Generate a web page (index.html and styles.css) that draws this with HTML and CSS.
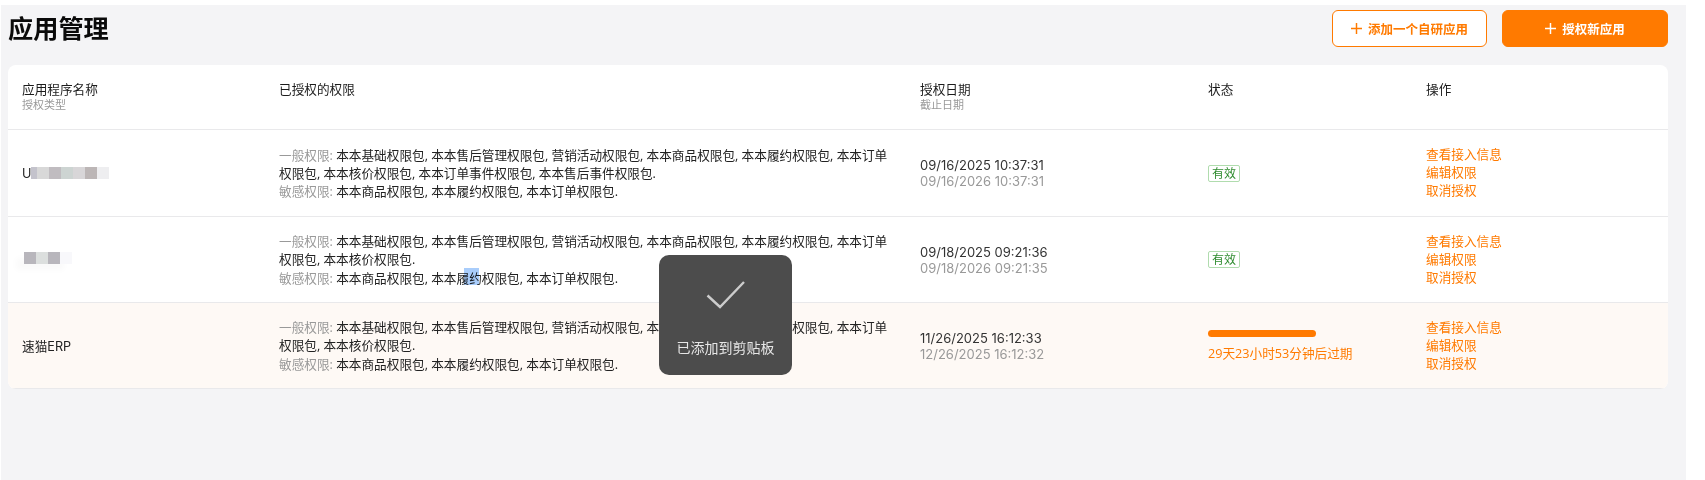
FILE: index.html
```html
<!DOCTYPE html>
<html lang="zh-CN">
<head>
<meta charset="utf-8">
<title>应用管理</title>
<link rel="stylesheet" href="styles.css">
</head>
<body>
<main class="page">
  <header class="topbar">
    <h1 class="title">应用管理</h1>
    <div class="actions">
      <button class="btn btn-outline"><svg class="plus" viewBox="0 0 12 12"><path d="M6 0v12M0 6h12"/></svg>添加一个自研应用</button>
      <button class="btn btn-solid"><svg class="plus" viewBox="0 0 12 12"><path d="M6 0v12M0 6h12"/></svg>授权新应用</button>
    </div>
  </header>
  <section class="card">
    <div class="row head">
      <div class="cell"><div>应用程序名称</div><div class="sub">授权类型</div></div>
      <div class="cell">已授权的权限</div>
      <div class="cell"><div>授权日期</div><div class="sub">截止日期</div></div>
      <div class="cell">状态</div>
      <div class="cell">操作</div>
    </div>

    <div class="row body first">
      <div class="cell name"><span>U</span><span class="mosaic"><i class="t a"></i><i class="t b"></i><i class="t c"></i><i class="t d"></i><i class="t e"></i><i class="t f"></i><i class="t g"></i></span></div>
      <div class="cell perms">
        <div><span class="muted">一般权限:</span> 本本基础权限包, 本本售后管理权限包, 营销活动权限包, 本本商品权限包, 本本履约权限包, 本本订单权限包, 本本核价权限包, 本本订单事件权限包, 本本售后事件权限包.</div>
        <div><span class="muted">敏感权限:</span> 本本商品权限包, 本本履约权限包, 本本订单权限包.</div>
      </div>
      <div class="cell dates"><div>09/16/2025 10:37:31</div><div class="muted">09/16/2026 10:37:31</div></div>
      <div class="cell"><span class="badge">有效</span></div>
      <div class="cell links"><a>查看接入信息</a><a>编辑权限</a><a>取消授权</a></div>
    </div>

    <div class="row body">
      <div class="cell name"><span class="mosaic mosaic-2"><i class="t h"></i><i class="t i"></i><i class="t h"></i><i class="t j"></i></span></div>
      <div class="cell perms">
        <div><span class="muted">一般权限:</span> 本本基础权限包, 本本售后管理权限包, 营销活动权限包, 本本商品权限包, 本本履约权限包, 本本订单权限包, 本本核价权限包.</div>
        <div><span class="muted">敏感权限:</span> 本本商品权限包, 本本履约权限包, 本本订单权限包.</div>
        <span class="selection"></span>
      </div>
      <div class="cell dates"><div>09/18/2025 09:21:36</div><div class="muted">09/18/2026 09:21:35</div></div>
      <div class="cell"><span class="badge">有效</span></div>
      <div class="cell links"><a>查看接入信息</a><a>编辑权限</a><a>取消授权</a></div>
    </div>

    <div class="row body warn">
      <div class="cell name">速猫ERP</div>
      <div class="cell perms">
        <div><span class="muted">一般权限:</span> 本本基础权限包, 本本售后管理权限包, 营销活动权限包, 本本商品权限包, 本本履约权限包, 本本订单权限包, 本本核价权限包.</div>
        <div><span class="muted">敏感权限:</span> 本本商品权限包, 本本履约权限包, 本本订单权限包.</div>
      </div>
      <div class="cell dates"><div>11/26/2025 16:12:33</div><div class="muted">12/26/2025 16:12:32</div></div>
      <div class="cell expiry"><div class="bar"></div><div class="expiry-text">29天23小时53分钟后过期</div></div>
      <div class="cell links"><a>查看接入信息</a><a>编辑权限</a><a>取消授权</a></div>
    </div>
  </section>
</main>
<div class="toast">
  <svg class="check" viewBox="0 0 40 28"><path d="M1.5 14.5l12.5 11.5 24-25"/></svg>
  <div>已添加到剪贴板</div>
</div>
</body>
</html>
```
FILE: styles.css
```css
* { box-sizing: border-box; }
html, body { height: 100%; }
body {
  margin: 0;
  background: #fff;
  color: #1c1c1c;
  font-family: "Inter", "Noto Sans CJK SC", sans-serif;
  font-size: 12.65px;
  overflow: hidden;
}
.page {
  margin: 5px 19px 0 1px;
  height: 475px;
  background: #f4f4f6;
  padding: 5px 18px 0 7px;
}
.topbar {
  height: 55px;
  display: flex;
  justify-content: space-between;
  align-items: flex-start;
}
.title {
  margin: 0;
  font-size: 25.2px;
  line-height: 39px;
  font-weight: 700;
  color: #0a0a0a;
}
.actions { display: flex; gap: 15px; }
.btn {
  height: 37px;
  border-radius: 6px;
  border: 1px solid #ff7a00;
  font: 700 12.5px "Inter", "Noto Sans CJK SC", sans-serif;
  display: flex;
  align-items: center;
  justify-content: center;
  gap: 6px;
  padding: 0;
}
.btn-outline { width: 155px; background: #fff; color: #ff7a00; }
.btn-solid { width: 166px; background: #ff7a00; color: #fff; }
.plus { width: 11px; height: 11px; fill: none; stroke: currentColor; stroke-width: 1.6; }
.card {
  background: #fff;
  border-radius: 8px;
  overflow: hidden;
}
.row {
  display: grid;
  grid-template-columns: 257px 641px 288px 218px 256px;
  border-bottom: 1px solid #e9e9eb;
}
.head { height: 65px; padding-top: 17px; line-height: 16px; }
.body { height: 86px; align-items: center; }
.first { height: 87px; }
.warn { background: #fef9f5; }
.cell { padding: 0 14px; position: relative; }
.sub { font-size: 11px; line-height: 14px; color: #999; }
.muted { color: #999; }
.name { color: #222; display: flex; align-items: center; }
.mosaic { display: flex; height: 12px; }
.mosaic-2 { margin: 0 0 3px 2px; box-shadow: -8px 6px 6px #fafafa; }
.t { display: block; width: 12px; height: 12px; }
.a { width: 6px; background: #c4c3cc; }
.b { background: #d8d8d8; }
.c { background: #c0bcc0; }
.d { background: #cdd4d2; }
.e { background: #d8d6d8; }
.f { background: #bcb6b6; }
.g { background: #eeeef0; }
.h { background: #b8b6bc; }
.i { background: #dcdfde; }
.j { background: #f8f8fb; }
.perms {
  font-family: "Open Sans", "Noto Sans CJK SC", sans-serif;
  line-height: 18.3px;
  color: #222;
}
.selection {
  position: absolute;
  left: 199px;
  top: 36px;
  width: 15px;
  height: 17px;
  background: #a9cdfb;
  mix-blend-mode: multiply;
}
.dates { line-height: 16px; font-size: 13px; color: #333; }
.dates .muted { color: #999; }
.badge {
  display: inline-block;
  width: 32px;
  height: 17px;
  line-height: 15px;
  border: 1px solid #b0dcae;
  border-radius: 2px;
  font-size: 12px;
  text-align: center;
  color: #2e8b2e;
}
.bar { width: 108px; height: 7px; border-radius: 4px; background: #ff7a00; }
.expiry-text {
  font-family: "Open Sans", "Noto Sans CJK SC", sans-serif;
  color: #ff7a00;
  margin-top: 7px;
  line-height: 18px;
}
.links { display: flex; flex-direction: column; line-height: 18px; color: #ff7a00; }
.toast {
  position: absolute;
  left: 659px;
  top: 255px;
  width: 133px;
  height: 120px;
  border-radius: 10px;
  background: #4c4c4c;
  color: #e6e6e6;
  font-size: 14px;
  line-height: 20px;
  text-align: center;
  padding-top: 26px;
}
.check {
  display: block;
  width: 40px;
  height: 28px;
  margin: 0 auto 29px;
  fill: none;
  stroke: #ccc;
  stroke-width: 2.4;
}
```
